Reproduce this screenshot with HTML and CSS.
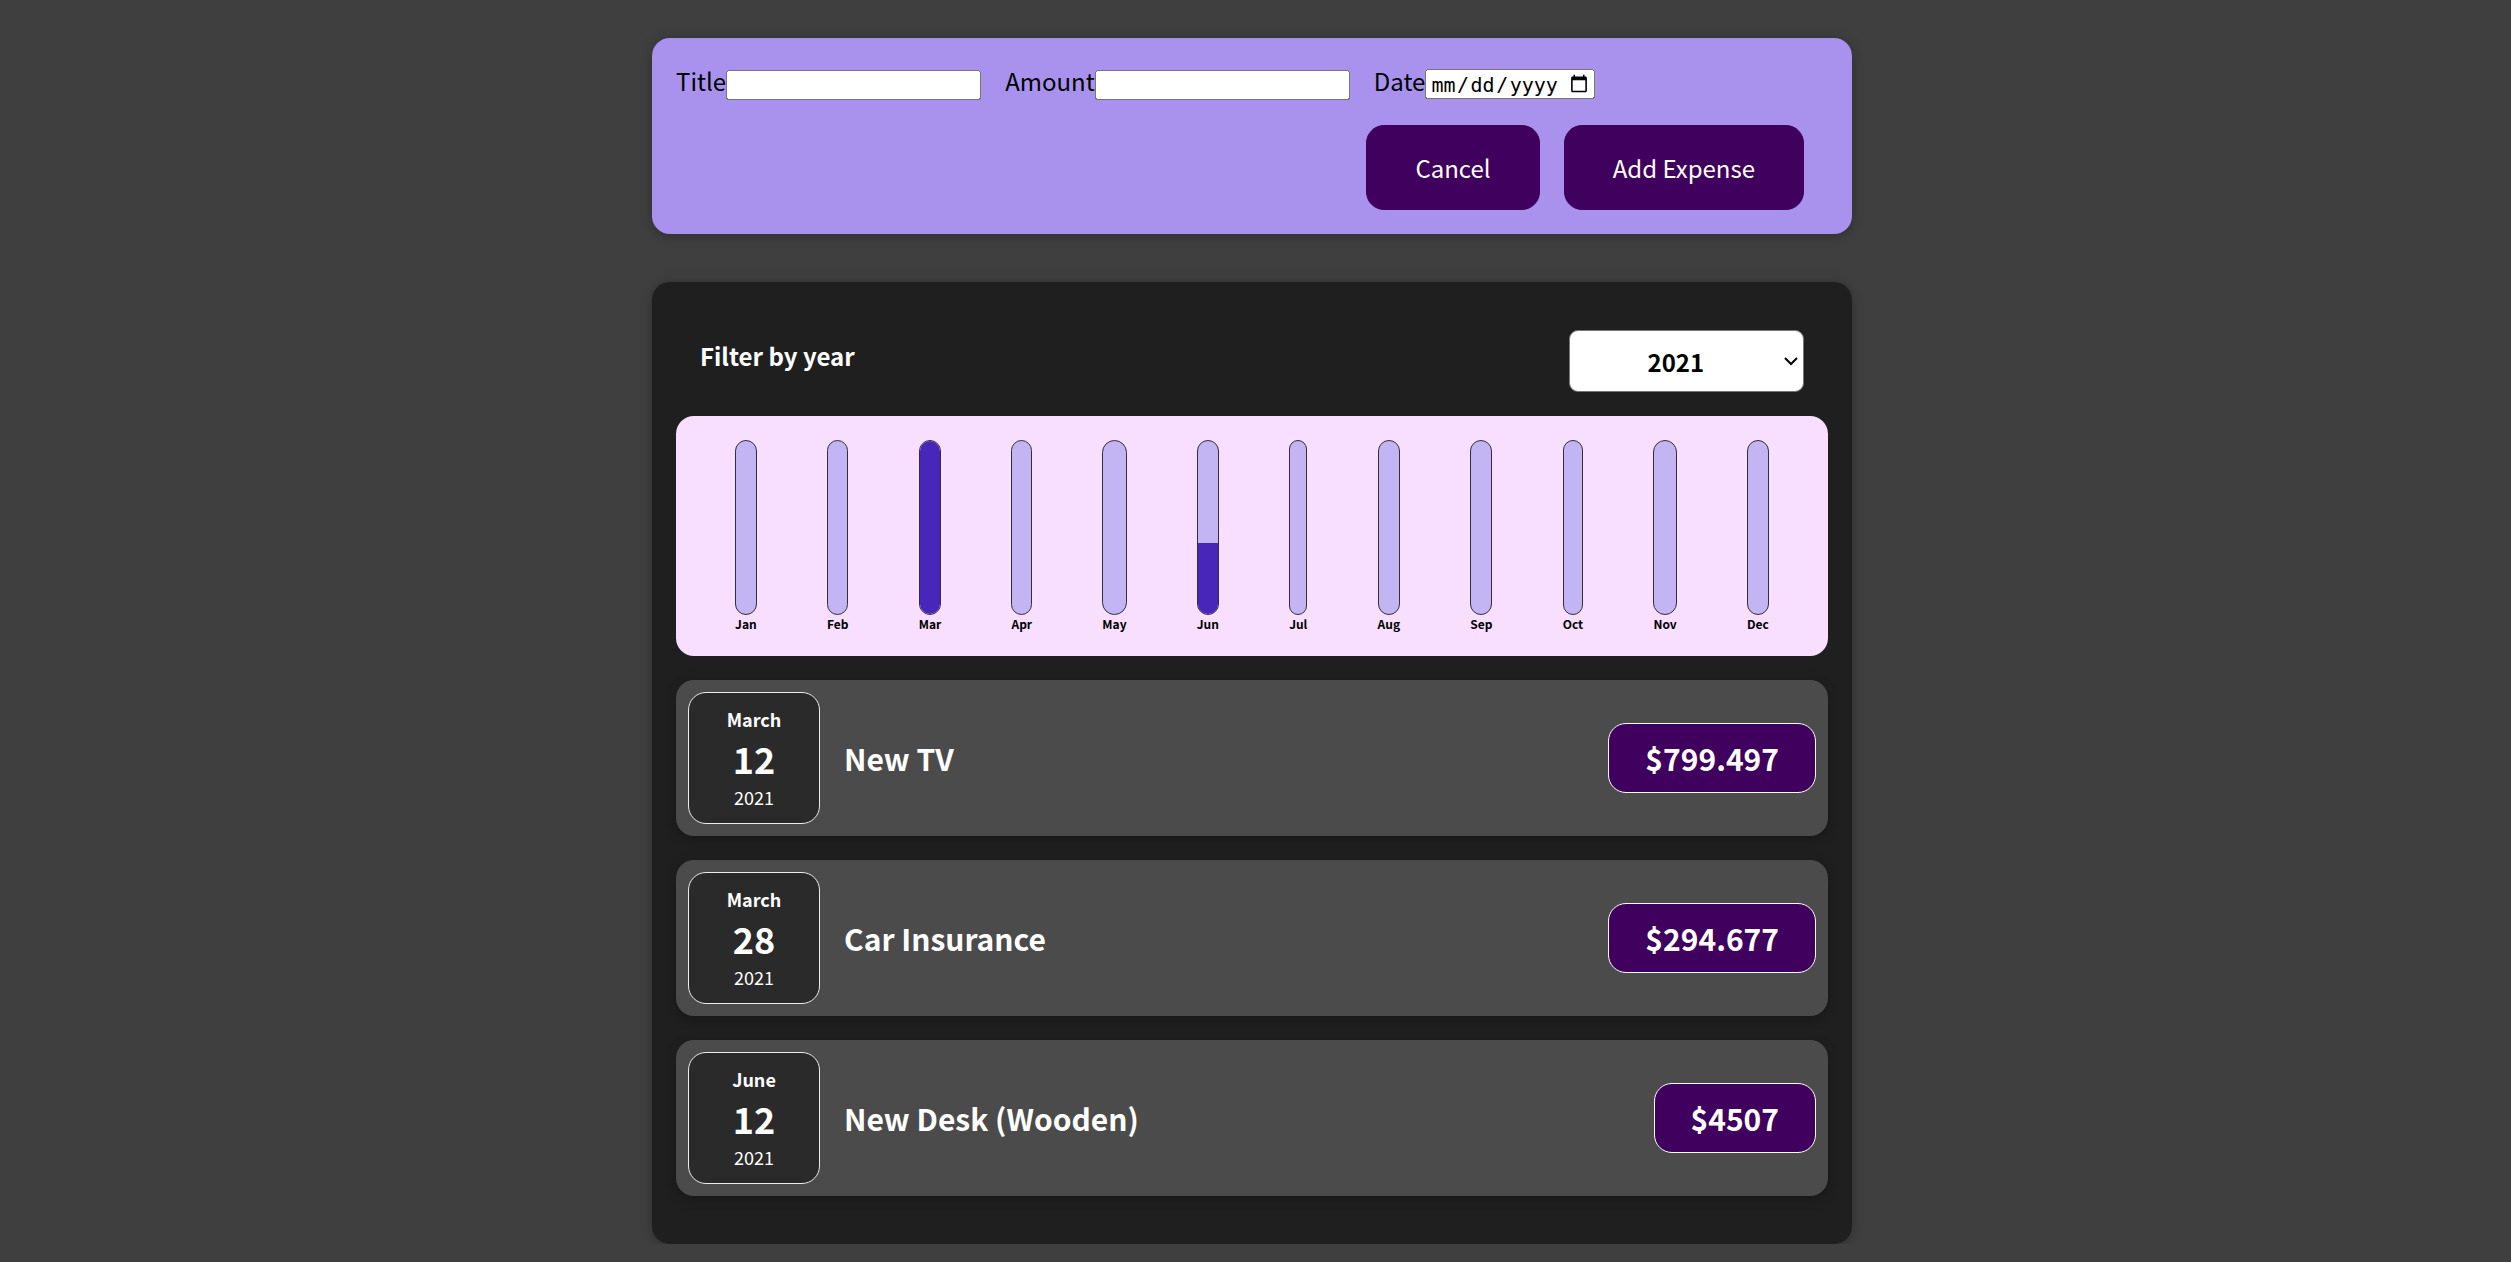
FILE: index.html
```html
<!DOCTYPE html>
<html lang="en">
<head>
<meta charset="utf-8">
<title>Expenses</title>
<link rel="stylesheet" href="styles.css">
</head>
<body>
<div class="app">
  <div class="new-expense">
    <form>
      <div class="new-expense__controls">
        <div class="new-expense__control"><label>Title</label><input class="field" type="text"></div>
        <div class="new-expense__control"><label>Amount</label><input class="field" type="number" min="0.01" step="0.01"></div>
        <div class="new-expense__control"><label>Date</label><input class="field field--date" type="date" min="2019-01-01" max="2022-12-31"></div>
      </div>
      <div class="new-expense__actions">
        <button type="button">Cancel</button><button type="submit">Add Expense</button>
      </div>
    </form>
  </div>

  <div class="card expenses">
    <div class="expenses-filter">
      <div class="expenses-filter__control">
        <label>Filter by year</label>
        <select>
          <option value="2022">2022</option>
          <option value="2021" selected>2021</option>
          <option value="2020">2020</option>
          <option value="2019">2019</option>
        </select>
      </div>
    </div>

    <div class="chart">
      <div class="chart-bar"><div class="chart-bar__inner"><div class="chart-bar__fill" style="height:0%"></div></div><div class="chart-bar__label">Jan</div></div>
      <div class="chart-bar"><div class="chart-bar__inner"><div class="chart-bar__fill" style="height:0%"></div></div><div class="chart-bar__label">Feb</div></div>
      <div class="chart-bar"><div class="chart-bar__inner"><div class="chart-bar__fill" style="height:100%"></div></div><div class="chart-bar__label">Mar</div></div>
      <div class="chart-bar"><div class="chart-bar__inner"><div class="chart-bar__fill" style="height:0%"></div></div><div class="chart-bar__label">Apr</div></div>
      <div class="chart-bar"><div class="chart-bar__inner"><div class="chart-bar__fill" style="height:0%"></div></div><div class="chart-bar__label">May</div></div>
      <div class="chart-bar"><div class="chart-bar__inner"><div class="chart-bar__fill" style="height:41.2%"></div></div><div class="chart-bar__label">Jun</div></div>
      <div class="chart-bar"><div class="chart-bar__inner"><div class="chart-bar__fill" style="height:0%"></div></div><div class="chart-bar__label">Jul</div></div>
      <div class="chart-bar"><div class="chart-bar__inner"><div class="chart-bar__fill" style="height:0%"></div></div><div class="chart-bar__label">Aug</div></div>
      <div class="chart-bar"><div class="chart-bar__inner"><div class="chart-bar__fill" style="height:0%"></div></div><div class="chart-bar__label">Sep</div></div>
      <div class="chart-bar"><div class="chart-bar__inner"><div class="chart-bar__fill" style="height:0%"></div></div><div class="chart-bar__label">Oct</div></div>
      <div class="chart-bar"><div class="chart-bar__inner"><div class="chart-bar__fill" style="height:0%"></div></div><div class="chart-bar__label">Nov</div></div>
      <div class="chart-bar"><div class="chart-bar__inner"><div class="chart-bar__fill" style="height:0%"></div></div><div class="chart-bar__label">Dec</div></div>
    </div>

    <ul class="expenses-list">
      <li>
        <div class="card expense-item">
          <div class="expense-date">
            <div class="expense-date__month">March</div>
            <div class="expense-date__day">12</div>
            <div class="expense-date__year">2021</div>
          </div>
          <div class="expense-item__description">
            <h2>New TV</h2>
            <div class="expense-item__price">$799.497</div>
          </div>
        </div>
      </li>
      <li>
        <div class="card expense-item">
          <div class="expense-date">
            <div class="expense-date__month">March</div>
            <div class="expense-date__day">28</div>
            <div class="expense-date__year">2021</div>
          </div>
          <div class="expense-item__description">
            <h2>Car Insurance</h2>
            <div class="expense-item__price">$294.677</div>
          </div>
        </div>
      </li>
      <li>
        <div class="card expense-item">
          <div class="expense-date">
            <div class="expense-date__month">June</div>
            <div class="expense-date__day">12</div>
            <div class="expense-date__year">2021</div>
          </div>
          <div class="expense-item__description">
            <h2>New Desk (Wooden)</h2>
            <div class="expense-item__price">$4507</div>
          </div>
        </div>
      </li>
    </ul>
  </div>
</div>
</body>
</html>
```

FILE: styles.css
```css
* {
  box-sizing: border-box;
}

html {
  font-family: "Noto Sans CJK JP", "Noto Sans", sans-serif;
}

body {
  margin: 0;
  background-color: #3f3f3f;
  zoom: 1.5;
}

.app {
  padding-right: 4.67px;
}

/* ---------- new expense form ---------- */
.new-expense {
  background-color: #a892ee;
  padding: 1rem;
  margin: 25.33px auto 2rem;
  width: 50rem;
  max-width: 95%;
  border-radius: 12px;
  text-align: center;
  box-shadow: 0 1px 8px rgba(0, 0, 0, 0.25);
}

.new-expense__controls {
  display: flex;
  flex-wrap: wrap;
  gap: 1rem;
  margin-bottom: 1rem;
  text-align: left;
  min-height: 26px;
}

.new-expense__control label {
  color: #000;
  vertical-align: -0.5px;
}

.field {
  width: 170px;
  height: 20px;
  vertical-align: -1px;
}

.field--date {
  width: 113px;
}

.new-expense__actions {
  text-align: right;
}

.new-expense button {
  font: inherit;
  cursor: pointer;
  padding: 1rem 2rem;
  border: 1px solid #40005d;
  background-color: #40005d;
  color: white;
  border-radius: 12px;
  margin-right: 1rem;
}

/* ---------- cards ---------- */
.card {
  border-radius: 12px;
  box-shadow: 0 1px 8px rgba(0, 0, 0, 0.25);
}

.expenses {
  padding: 1rem;
  background-color: rgb(31, 31, 31);
  margin: 2rem auto 0;
  width: 50rem;
  max-width: 95%;
}

/* ---------- filter ---------- */
.expenses-filter {
  color: white;
  padding: 0 1rem;
}

.expenses-filter__control {
  display: flex;
  width: 100%;
  align-items: center;
  justify-content: space-between;
  margin: 1rem 0;
}

.expenses-filter label {
  font-weight: bold;
  margin-bottom: 0.5rem;
}

.expenses-filter select {
  font: inherit;
  padding: 0.5rem 3rem;
  font-weight: bold;
  border-radius: 6px;
  background-color: #fff;
  color: #000;
  border: 1px solid #767676;
  width: 157px;
  height: 41.5px;
}

/* ---------- chart ---------- */
.chart {
  padding: 1rem;
  border-radius: 12px;
  background-color: #f8dfff;
  text-align: center;
  display: flex;
  justify-content: space-around;
  height: 10rem;
}

.chart-bar {
  height: 100%;
  display: flex;
  flex-direction: column;
  align-items: center;
}

.chart-bar__inner {
  height: 100%;
  width: 100%;
  border: 1px solid #313131;
  border-radius: 12px;
  background-color: #c3b4f3;
  overflow: hidden;
  display: flex;
  flex-direction: column;
  justify-content: flex-end;
}

.chart-bar__fill {
  background-color: #4826b9;
  width: 100%;
}

.chart-bar__label {
  font-weight: bold;
  font-size: 0.5rem;
  text-align: center;
}

/* ---------- list ---------- */
.expenses-list {
  list-style: none;
  padding: 0;
}

.expense-item {
  display: flex;
  justify-content: space-between;
  align-items: center;
  box-shadow: 0 2px 8px rgba(0, 0, 0, 0.25);
  padding: 0.5rem;
  margin: 1rem 0;
  border-radius: 12px;
  background-color: #4b4b4b;
}

.expense-item__description {
  display: flex;
  flex-direction: row;
  align-items: center;
  justify-content: flex-start;
  flex: 1;
}

.expense-item h2 {
  font-size: 1.25rem;
  flex: 1;
  margin: 0 1rem;
  color: white;
}

.expense-item__price {
  font-size: 1.25rem;
  font-weight: bold;
  color: white;
  background-color: #40005d;
  border: 1px solid white;
  padding: 0.5rem 1.5rem;
  border-radius: 12px;
}

.expense-date {
  display: flex;
  flex-direction: column;
  width: 5.5rem;
  height: 5.5rem;
  border: 1px solid #ececec;
  background-color: #2a2a2a;
  color: white;
  border-radius: 12px;
  align-items: center;
  justify-content: center;
}

.expense-date__month {
  font-size: 0.75rem;
  font-weight: bold;
}

.expense-date__year {
  font-size: 0.75rem;
}

.expense-date__day {
  font-size: 1.5rem;
  font-weight: bold;
}
```
